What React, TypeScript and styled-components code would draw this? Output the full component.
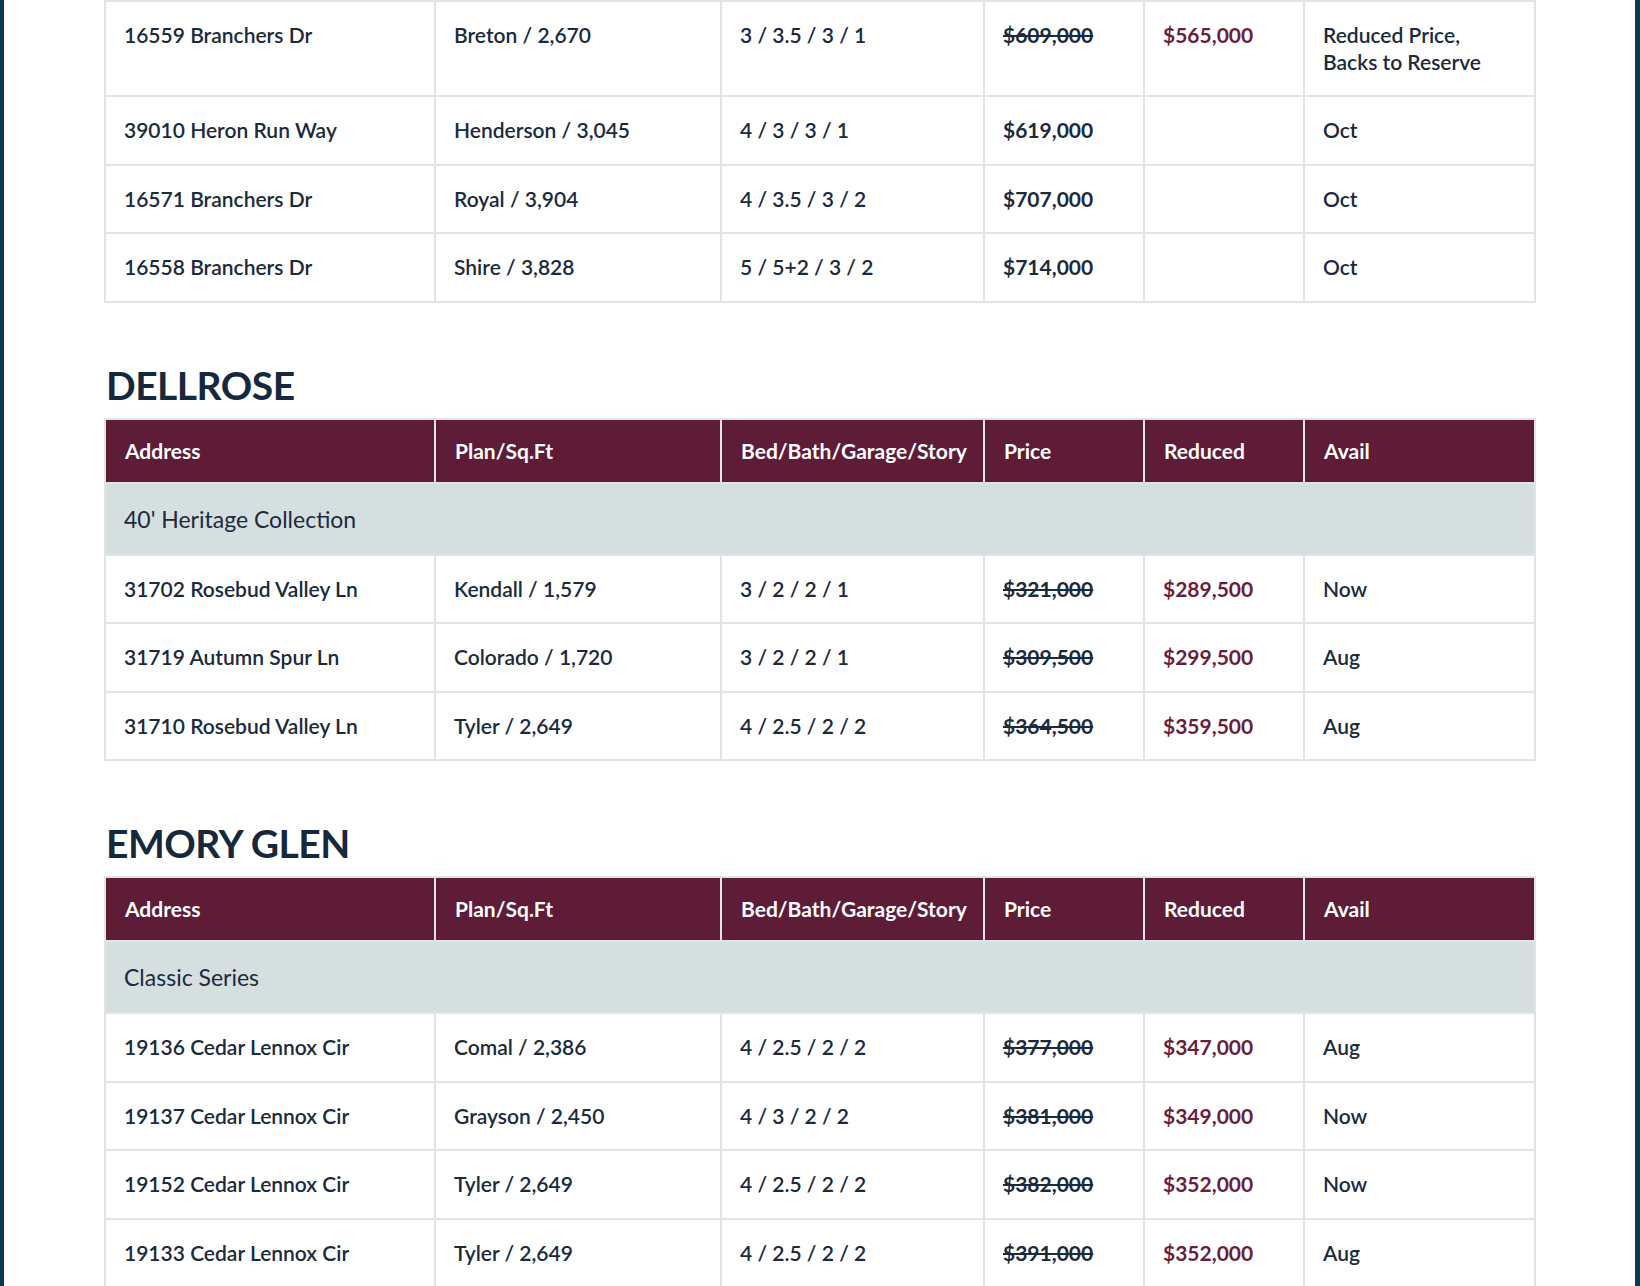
import React from "react";
import styled, { createGlobalStyle } from "styled-components";

const GlobalStyle = createGlobalStyle`
  html, body {
    margin: 0;
    padding: 0;
  }
  body {
    background: #0b3852;
    font-family: Lato, "Open Sans", "Liberation Sans", sans-serif;
    color: #1b2a3d;
    -webkit-font-smoothing: antialiased;
  }
`;

const Page = styled.main`
  min-height: 100vh;
  background: #ffffff;
  margin: 0 5px 0 4px;
  padding: 0 99px 0 100px;
  box-sizing: border-box;
`;

const Section = styled.section<{ $first?: boolean }>`
  margin-top: ${(p) => (p.$first ? "0" : "58px")};
`;

const Heading = styled.h2`
  margin: 0 0 9px;
  padding-left: 2px;
  font-size: 39px;
  line-height: 48px;
  font-weight: 700;
  letter-spacing: -0.5px;
  color: #16283c;
  text-transform: uppercase;
`;

const Table = styled.table`
  width: 100%;
  border-collapse: collapse;
  table-layout: fixed;
`;

const HeadCell = styled.th`
  background: #5e1c37;
  color: #ffffff;
  text-align: left;
  font-size: 21px;
  font-weight: 700;
  line-height: 28px;
  padding: 17px 19px;
  border: 2px solid #dfe5e5;
  white-space: nowrap;
`;

const GroupCell = styled.td`
  background: #d5dfdf;
  font-size: 23px;
  font-weight: 400;
  line-height: 26px;
  padding: 22px 18px;
  border: 2px solid #dfe5e5;
  color: #1b2a3d;
`;

const Cell = styled.td<{ $tone?: "plain" | "price" | "was" | "reduced" }>`
  vertical-align: top;
  font-size: 21px;
  line-height: 26.5px;
  padding: 20px 18px;
  border: 2px solid #dfe5e5;
  color: ${(p) => (p.$tone === "reduced" ? "#6b1d3c" : "#1b2a3d")};
  font-weight: ${(p) => (p.$tone && p.$tone !== "plain" ? 700 : 600)};
  text-decoration: ${(p) => (p.$tone === "was" ? "line-through" : "none")};
`;

type Row = {
  address: string;
  plan: string;
  beds: string;
  price: string;
  reduced?: string;
  avail: string;
};

type Group = { name?: string; rows: Row[] };

type Community = { name?: string; groups: Group[] };

const communities: Community[] = [
  {
    groups: [
      {
        rows: [
          {
            address: "16559 Branchers Dr",
            plan: "Breton / 2,670",
            beds: "3 / 3.5 / 3 / 1",
            price: "$609,000",
            reduced: "$565,000",
            avail: "Reduced Price, Backs to Reserve",
          },
          {
            address: "39010 Heron Run Way",
            plan: "Henderson / 3,045",
            beds: "4 / 3 / 3 / 1",
            price: "$619,000",
            avail: "Oct",
          },
          {
            address: "16571 Branchers Dr",
            plan: "Royal / 3,904",
            beds: "4 / 3.5 / 3 / 2",
            price: "$707,000",
            avail: "Oct",
          },
          {
            address: "16558 Branchers Dr",
            plan: "Shire / 3,828",
            beds: "5 / 5+2 / 3 / 2",
            price: "$714,000",
            avail: "Oct",
          },
        ],
      },
    ],
  },
  {
    name: "Dellrose",
    groups: [
      {
        name: "40' Heritage Collection",
        rows: [
          {
            address: "31702 Rosebud Valley Ln",
            plan: "Kendall / 1,579",
            beds: "3 / 2 / 2 / 1",
            price: "$321,000",
            reduced: "$289,500",
            avail: "Now",
          },
          {
            address: "31719 Autumn Spur Ln",
            plan: "Colorado / 1,720",
            beds: "3 / 2 / 2 / 1",
            price: "$309,500",
            reduced: "$299,500",
            avail: "Aug",
          },
          {
            address: "31710 Rosebud Valley Ln",
            plan: "Tyler / 2,649",
            beds: "4 / 2.5 / 2 / 2",
            price: "$364,500",
            reduced: "$359,500",
            avail: "Aug",
          },
        ],
      },
    ],
  },
  {
    name: "Emory Glen",
    groups: [
      {
        name: "Classic Series",
        rows: [
          {
            address: "19136 Cedar Lennox Cir",
            plan: "Comal / 2,386",
            beds: "4 / 2.5 / 2 / 2",
            price: "$377,000",
            reduced: "$347,000",
            avail: "Aug",
          },
          {
            address: "19137 Cedar Lennox Cir",
            plan: "Grayson / 2,450",
            beds: "4 / 3 / 2 / 2",
            price: "$381,000",
            reduced: "$349,000",
            avail: "Now",
          },
          {
            address: "19152 Cedar Lennox Cir",
            plan: "Tyler / 2,649",
            beds: "4 / 2.5 / 2 / 2",
            price: "$382,000",
            reduced: "$352,000",
            avail: "Now",
          },
          {
            address: "19133 Cedar Lennox Cir",
            plan: "Tyler / 2,649",
            beds: "4 / 2.5 / 2 / 2",
            price: "$391,000",
            reduced: "$352,000",
            avail: "Aug",
          },
        ],
      },
    ],
  },
];

const columns = [
  "Address",
  "Plan/Sq.Ft",
  "Bed/Bath/Garage/Story",
  "Price",
  "Reduced",
  "Avail",
];
const widths = [330, 286, 263, 160, 160, 231];

function Availability({ text }: { text: string }) {
  if (text === "Reduced Price, Backs to Reserve") {
    return (
      <>
        Reduced Price,
        <br />
        Backs to Reserve
      </>
    );
  }
  return <>{text}</>;
}

function ListingTable({ community }: { community: Community }) {
  return (
    <Table>
      <colgroup>
        {widths.map((w, i) => (
          <col key={i} style={{ width: w }} />
        ))}
      </colgroup>
      {community.name && (
        <thead>
          <tr>
            {columns.map((c) => (
              <HeadCell key={c}>{c}</HeadCell>
            ))}
          </tr>
        </thead>
      )}
      <tbody>
        {community.groups.map((g, gi) => (
          <React.Fragment key={gi}>
            {g.name && (
              <tr>
                <GroupCell colSpan={6}>{g.name}</GroupCell>
              </tr>
            )}
            {g.rows.map((r) => (
              <tr key={r.address}>
                <Cell>{r.address}</Cell>
                <Cell>{r.plan}</Cell>
                <Cell>{r.beds}</Cell>
                <Cell $tone={r.reduced ? "was" : "price"}>{r.price}</Cell>
                <Cell $tone="reduced">{r.reduced ?? ""}</Cell>
                <Cell>
                  <Availability text={r.avail} />
                </Cell>
              </tr>
            ))}
          </React.Fragment>
        ))}
      </tbody>
    </Table>
  );
}

export default function App() {
  return (
    <>
      <GlobalStyle />
      <Page>
        {communities.map((c, i) => (
          <Section key={i} $first={i === 0}>
            {c.name && <Heading>{c.name}</Heading>}
            <ListingTable community={c} />
          </Section>
        ))}
      </Page>
    </>
  );
}
